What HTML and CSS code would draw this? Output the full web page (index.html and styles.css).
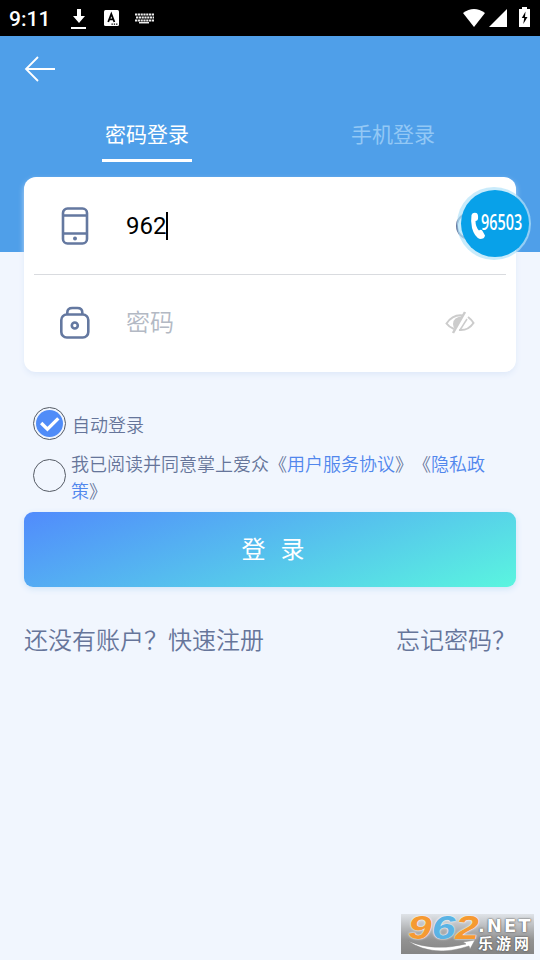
FILE: index.html
```html
<!DOCTYPE html>
<html lang="zh-CN">
<head>
<meta charset="utf-8">
<title>密码登录</title>
<link rel="stylesheet" href="styles.css">
</head>
<body>
<div class="status">
  <span class="clock">9:11</span>
  <svg class="s-download" width="16" height="22" viewBox="0 0 16 22"><path d="M6 1h4v7h4l-6 7-6-7h4zM0 19h15v2H0z" fill="#fff"/></svg>
  <svg class="s-input" width="15" height="16" viewBox="0 0 15 16"><rect width="15" height="16" rx="1.5" fill="#fff"/><path d="M4.2 12 7.3 4l3.1 8M5.2 9.3h4.2" fill="none" stroke="#000" stroke-width="1.8"/><path d="M7.5 13.5h1.3v1.3H7.5zm2.3 0h1.3v1.3H9.8zm2.3 0h1.3v1.3h-1.3z"/></svg>
  <svg class="s-keyboard" width="19" height="11" viewBox="0 0 19 11"><path d="M0 1.5h19M1 4.5h18M0 7.5h19" stroke="#eee" stroke-width="2.2" stroke-dasharray="2.2 .6"/><path d="M4 9.7h10" stroke="#eee" stroke-width="1.5"/></svg>
  <div class="system">
    <svg width="22" height="18" viewBox="0 0 22 18"><path d="M0 4Q11-4 22 4L11 18z" fill="#fff"/></svg>
    <svg width="18" height="18" viewBox="0 0 18 18"><path d="M18 0v18H0z" fill="#fff"/></svg>
    <svg class="battery" width="11" height="20" viewBox="0 0 11 20"><path d="M3 0h5v2h3v18H0V2h3z" fill="#fff"/><path d="M6.5 4.5 2.8 11h2.4L4.3 17l4.2-7H6z"/></svg>
  </div>
</div>
<header class="header">
  <svg class="back" width="32" height="28" viewBox="0 0 32 28"><path d="M14 2 2 14l12 12M2 14h29" fill="none" stroke="#fff" stroke-width="1.8"/></svg>
  <nav class="tabs">
    <div class="tab active">密码登录</div>
    <div class="tab">手机登录</div>
  </nav>
</header>
<main class="main">
  <section class="card">
    <div class="field">
      <svg class="icon" width="32" height="38" viewBox="0 0 32 38"><g fill="none" stroke="#6478a0" stroke-width="2.6"><rect x="4" y="1.500" width="24" height="35" rx="4.500"/><path d="M4 8.500h24M4 26.500h24"/></g><circle cx="16" cy="31.500" r="2" fill="#6478a0"/></svg>
      <span class="value">962</span><span class="caret"></span>
      <div class="clear"></div>
      <div class="hotline">
        <svg width="16" height="28" viewBox="0 0 15 28"><path d="M1 3Q2 0 6 1q2 1 1.500 6Q7 9 5 9q0 6 3.500 9.500 2-1.500 3.500.5l2.500 4.500Q14 27 9.500 27 4 25 1.500 16 0 9 1 3z" fill="#fff"/></svg>
        <span>96503</span>
      </div>
    </div>
    <div class="field second">
      <svg class="icon" width="32" height="34" viewBox="0 0 32 34"><g fill="none" stroke="#6478a0" stroke-width="2.600"><rect x="2.300" y="8.500" width="27" height="23" rx="5.500"/><path d="M8.300 8V6.500q0-4.500 5-4.500h5q5 0 5 4.500V8"/><circle cx="15.800" cy="19.500" r="3"/></g></svg>
      <span class="placeholder">密码</span>
      <svg class="eye" width="30" height="24" viewBox="0 0 30 24"><g fill="none" stroke="#ccc" stroke-width="2"><path d="M9 18Q4 16 1.500 12.500 8 3 18 4.500M23 6q4 3 5.500 6Q23 20 14 19"/><path d="M20 1 8 22" stroke-width="2.500"/><path d="M22 8 15 19" stroke-width="1.500"/></g><path d="M18 5Q8 6 8 13q0 3 2 5z" fill="#ccc"/></svg>
    </div>
  </section>
  <div class="option auto">
    <span class="check"><svg width="27" height="27" viewBox="0 0 26 26"><circle cx="13" cy="13" r="13" fill="#508cf8"/><path d="m5 12.500 6 6L21.500 8" fill="none" stroke="#fff" stroke-width="3.200"/></svg></span>
    <span class="auto-text">自动登录</span>
  </div>
  <div class="option agree">
    <span class="check"></span>
    <div class="terms">
      <div class="line"><span>我已阅读并同意掌上爱众《</span><a>用户服务协议</a><span>》《</span><a>隐私政</a></div>
      <div class="line"><a>策</a><span>》</span></div>
    </div>
  </div>
  <div class="submit"><span>登</span><span>录</span></div>
  <div class="links"><span>还没有账户？快速注册</span><span>忘记密码？</span></div>
</main>
<div class="brand">
  <div class="brand-num"><b>9</b><b class="blue">6</b><b>2</b></div>
  <svg class="swoosh" width="68" height="14" viewBox="0 0 68 14"><path d="M0 1Q25 12 58 4l-3-2 12-2-5 9-1-3Q25 18 0 1z" fill="#fff" stroke="#888" stroke-width=".5"/></svg>
  <div class="brand-text"><span class="net">.NET</span><span class="cn">乐游网</span></div>
</div>
</body>
</html>
```
FILE: styles.css
```css
* { box-sizing: border-box; }
body {
  margin: 0;
  width: 540px;
  height: 960px;
  overflow: hidden;
  position: relative;
  background: #f1f6fe;
  color: #66759a;
  font-family: Roboto, "Noto Sans CJK SC", sans-serif;
  text-spacing-trim: space-all;
}
svg { display: block; flex: none; }
.status {
  height: 36px;
  background: #000;
  color: #fff;
  display: flex;
  align-items: center;
  padding: 0 10px 0 9px;
}
.clock { width: 62px; font-size: 21px; font-weight: 500; padding-top: 2px; }
.s-download { margin-top: 1px; }
.s-input { margin-left: 17px; }
.s-keyboard { margin-left: 16px; }
.system { margin-left: auto; display: flex; align-items: center; gap: 4px; }
.system .battery { margin-left: 8px; margin-top: -2px; }
.header { height: 216px; background: #4f9fe9; padding-top: 19px; }
.back { margin-left: 24px; }
.tabs { display: flex; justify-content: space-between; padding: 0 102px; margin-top: 32px; }
.tab {
  width: 90px;
  height: 47px;
  text-align: center;
  font-size: 21px;
  line-height: 40px;
  color: #93c8f5;
}
.tab.active { color: #fff; border-bottom: 3px solid #fff; }
.main { margin-top: -75px; padding: 0 24px; }
.card {
  height: 195px;
  background: #fff;
  border-radius: 12px;
  padding: 0 10px;
  box-shadow: 0 3px 6px -1px #dce7f8;
}
.field {
  height: 98px;
  border-bottom: 1px solid #d9dbdf;
  display: flex;
  align-items: center;
  padding-left: 25px;
  position: relative;
}
.field.second { height: 97px; border: 0; padding-bottom: 1px; }
.icon { margin-right: 35px; }
.value { color: #000; font-size: 24px; }
.caret { width: 2px; height: 28px; background: #000; }
.placeholder { color: #b3b9c4; font-size: 24px; font-weight: 350; line-height: 34px; }
.eye { margin-left: auto; margin-right: 31px; }
.clear {
  position: absolute;
  left: 422px;
  top: 35px;
  width: 28px;
  height: 28px;
  border: 2px solid #6478a0;
  border-radius: 50%;
}
.hotline {
  position: absolute;
  left: 427px;
  top: 13px;
  width: 68px;
  height: 67px;
  border-radius: 50%;
  background: #08a1e9;
  box-shadow: -1px 0 0 3px rgba(178, 227, 250, .7);
  display: flex;
  align-items: center;
  padding: 4px 0 0 9px;
  color: #fff;
}
.hotline span {
  font: 600 20px/24px "Open Sans", sans-serif;
  transform: scale(.72, 1.05);
  transform-origin: 0 50%;
  margin-left: -5px;
  margin-top: -6px;
}
.option { display: flex; font-size: 18px; font-weight: 350; }
.check {
  width: 33px;
  height: 33px;
  border: 1px solid #555b65;
  border-radius: 50%;
  display: flex;
  align-items: center;
  justify-content: center;
  flex: none;
}
.auto { margin: 35px 0 0 9px; height: 36px; }
.auto-text { margin-left: 6px; line-height: 38px; }
.agree { margin: 8px 0 0 9px; height: 61px; }
.agree .check { margin-top: 8px; }
.terms { margin-left: 5px; width: 432px; line-height: 27px; }
.line { display: flex; white-space: nowrap; }
.terms a { color: #5187ed; }
.submit {
  height: 75px;
  border-radius: 9px;
  background: linear-gradient(160deg, #518bfc, #5af5df);
  box-shadow: 0 2px 6px #cfe4f8;
  display: flex;
  align-items: center;
  justify-content: center;
  gap: 15px;
  padding: 0 0 5px 6px;
  font-size: 24px;
  color: #fff;
}
.links {
  display: flex;
  justify-content: space-between;
  margin-top: 36px;
  font-size: 24px;
  font-weight: 350;
  line-height: 36px;
}
.brand {
  position: absolute;
  left: 401px;
  top: 914px;
  width: 133px;
  height: 40px;
  background: linear-gradient(#dfe3e8, #929292 65%, #858585);
}
.brand-num {
  display: flex;
  position: absolute;
  left: 7px;
  top: -4px;
  font: italic 700 34px/34px "Liberation Sans", sans-serif;
  transform: scaleX(1.25);
  transform-origin: 0 0;
  color: #f59a32;
  text-shadow: 0 0 2px #fff, 0 0 1px #fff;
}
.brand-num b.blue { color: #5ab3e4; }
.swoosh { position: absolute; left: 7px; top: 26px; }
.brand-text {
  position: absolute;
  left: 77px;
  top: 3px;
  display: flex;
  flex-direction: column;
  color: #fff;
  text-shadow: 0 0 2px #555, 0 0 1px #555;
}
.net { font: 700 18px/18px "DejaVu Sans", sans-serif; letter-spacing: 2px; }
.cn { font-size: 15px; line-height: 18px; font-weight: 700; letter-spacing: 3px; }
```
